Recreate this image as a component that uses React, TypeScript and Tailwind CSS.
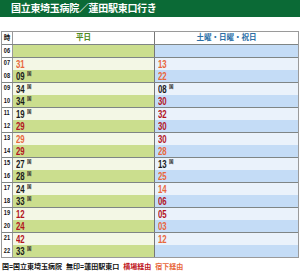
type Kind = 'k' | 'o' | 'r';
type Dep = { m: string; k: Kind } | null;

const HOURS = ['06', '07', '08', '09', '10', '11', '12', '13', '14', '15', '16', '17', '18', '19', '20', '21', '22'];

const WEEKDAY: Dep[] = [
  null,
  { m: '31', k: 'o' },
  { m: '09', k: 'k' },
  { m: '34', k: 'k' },
  { m: '34', k: 'k' },
  { m: '19', k: 'k' },
  { m: '29', k: 'r' },
  { m: '29', k: 'o' },
  { m: '29', k: 'r' },
  { m: '27', k: 'k' },
  { m: '28', k: 'k' },
  { m: '24', k: 'k' },
  { m: '33', k: 'k' },
  { m: '12', k: 'r' },
  { m: '24', k: 'r' },
  { m: '42', k: 'r' },
  { m: '33', k: 'k' },
];

const HOLIDAY: Dep[] = [
  null,
  { m: '13', k: 'o' },
  { m: '22', k: 'o' },
  { m: '08', k: 'k' },
  { m: '30', k: 'r' },
  { m: '32', k: 'r' },
  { m: '30', k: 'r' },
  { m: '30', k: 'r' },
  { m: '28', k: 'o' },
  { m: '13', k: 'k' },
  { m: '25', k: 'o' },
  { m: '14', k: 'o' },
  { m: '06', k: 'r' },
  { m: '05', k: 'r' },
  { m: '03', k: 'o' },
  { m: '12', k: 'o' },
  null,
];

const font = { fontFamily: '"Liberation Sans", "Noto Sans CJK JP", sans-serif' };

function Minute({ dep }: { dep: Dep }) {
  if (!dep) return null;
  const color = dep.k === 'o' ? 'text-[#e8673b]' : dep.k === 'r' ? 'text-[#b3141d]' : 'text-[#1a1a1a]';
  return (
    <div className="flex items-start pl-[3px]">
      <span className={`inline-block w-[9px] origin-left scale-x-[0.68] text-[11.5px] leading-[12px] font-bold ${color}`}>{dep.m}</span>
      {dep.k === 'k' && (
        <span className="mt-[1px] ml-[2px] text-[4.5px] leading-[5px] font-bold text-[#333]">国</span>
      )}
    </div>
  );
}

export default function App() {
  return (
    <div className="w-[300px] h-[271px] bg-white overflow-hidden" style={font}>
      <div className="h-[17px] bg-[#0b6a36] flex items-center pl-[11px]">
        <span className="text-[10px] font-bold text-white tracking-[-0.3px]">国立東埼玉病院／蓮田駅東口行き</span>
      </div>

      <div className="mt-[14px] mx-[1px] w-[298px] border border-[#9a9a9a]">
        <div className="grid grid-cols-[11px_142px_1fr] h-[12px]">
          <div className="border-r border-[#9a9a9a] flex items-center justify-center">
            <span className="text-[6.5px] font-bold text-[#111]">時</span>
          </div>
          <div className="border-r border-[#777] flex items-center justify-center">
            <span className="text-[7.5px] font-bold text-[#4f8a22]">平日</span>
          </div>
          <div className="flex items-center justify-center">
            <span className="text-[7.5px] font-bold text-[#2c6fa6]">土曜・日曜・祝日</span>
          </div>
        </div>
        {HOURS.map((h, i) => {
          const dark = i % 2 === 0;
          return (
            <div key={h} className="grid grid-cols-[11px_142px_1fr] h-[12.5px] border-t border-[#7f8585]">
              <div className="bg-white border-r border-[#9a9a9a] flex items-center justify-center">
                <span className="inline-block scale-x-[0.8] text-[7px] font-bold text-[#111]">{h}</span>
              </div>
              <div className={`${dark ? 'bg-[#cbde8e]' : 'bg-[#f3f7e5]'} border-r border-[#777] flex items-center`}>
                <Minute dep={WEEKDAY[i]} />
              </div>
              <div className={`${dark ? 'bg-[#c4dcf6]' : 'bg-[#eaf2fb]'} flex items-center`}>
                <Minute dep={HOLIDAY[i]} />
              </div>
            </div>
          );
        })}
      </div>

      <div className="mt-[4px] pl-[2px] flex gap-[4px] text-[7px] font-bold leading-[9px]">
        <span className="text-[#111]">国=国立東埼玉病院</span>
        <span className="text-[#111]">無印=蓮田駅東口</span>
        <span className="text-[#c0151d]">横場経由</span>
        <span className="text-[#e8673b]">宿下経由</span>
      </div>
    </div>
  );
}
